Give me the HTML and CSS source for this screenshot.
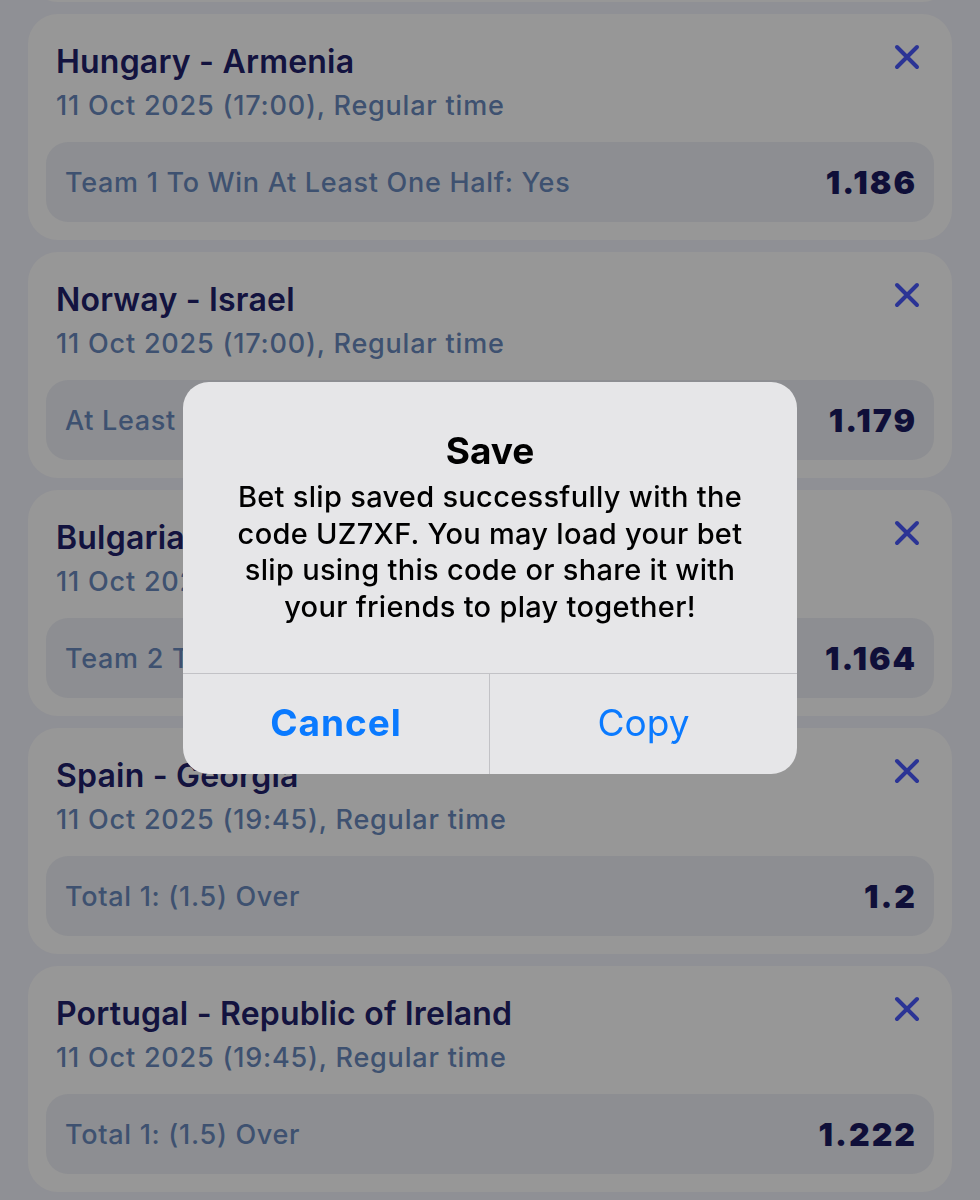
FILE: index.html
```html
<!DOCTYPE html>
<html lang="en">
<head>
<meta charset="utf-8">
<title>Bet slip</title>
<link rel="stylesheet" href="styles.css">
</head>
<body>
<main class="screen">
  <section class="slip-list">
    <article class="bet">
      <div class="bet-head">
        <div class="bet-info">
          <h2 class="bet-title">Scotland - Belarus</h2>
          <p class="bet-time">12 Oct 2025 (17:00), Regular time</p>
        </div>
        <button class="remove" aria-label="Remove"><svg viewBox="0 0 24 24"><path d="M4 4L20 20M20 4L4 20"/></svg></button>
      </div>
      <div class="pick"><span class="pick-name">Total 1: (1.5) Over</span><span class="pick-odds">1.25</span></div>
    </article>
    <article class="bet">
      <div class="bet-head">
        <div class="bet-info">
          <h2 class="bet-title">Hungary - Armenia</h2>
          <p class="bet-time">11 Oct 2025 (17:00), Regular time</p>
        </div>
        <button class="remove" aria-label="Remove"><svg viewBox="0 0 24 24"><path d="M4 4L20 20M20 4L4 20"/></svg></button>
      </div>
      <div class="pick"><span class="pick-name">Team 1 To Win At Least One Half: Yes</span><span class="pick-odds">1.186</span></div>
    </article>
    <article class="bet">
      <div class="bet-head">
        <div class="bet-info">
          <h2 class="bet-title">Norway - Israel</h2>
          <p class="bet-time">11 Oct 2025 (17:00), Regular time</p>
        </div>
        <button class="remove" aria-label="Remove"><svg viewBox="0 0 24 24"><path d="M4 4L20 20M20 4L4 20"/></svg></button>
      </div>
      <div class="pick"><span class="pick-name">At Least One Team Will Not Score: No</span><span class="pick-odds">1.179</span></div>
    </article>
    <article class="bet">
      <div class="bet-head">
        <div class="bet-info">
          <h2 class="bet-title">Bulgaria - Türkiye</h2>
          <p class="bet-time">11 Oct 2025 (19:45), Regular time</p>
        </div>
        <button class="remove" aria-label="Remove"><svg viewBox="0 0 24 24"><path d="M4 4L20 20M20 4L4 20"/></svg></button>
      </div>
      <div class="pick"><span class="pick-name">Team 2 To Win At Least One Half: Yes</span><span class="pick-odds">1.164</span></div>
    </article>
    <article class="bet">
      <div class="bet-head">
        <div class="bet-info">
          <h2 class="bet-title">Spain - Georgia</h2>
          <p class="bet-time">11 Oct 2025 (19:45), Regular time</p>
        </div>
        <button class="remove" aria-label="Remove"><svg viewBox="0 0 24 24"><path d="M4 4L20 20M20 4L4 20"/></svg></button>
      </div>
      <div class="pick"><span class="pick-name">Total 1: (1.5) Over</span><span class="pick-odds">1.2</span></div>
    </article>
    <article class="bet">
      <div class="bet-head">
        <div class="bet-info">
          <h2 class="bet-title">Portugal - Republic of Ireland</h2>
          <p class="bet-time">11 Oct 2025 (19:45), Regular time</p>
        </div>
        <button class="remove" aria-label="Remove"><svg viewBox="0 0 24 24"><path d="M4 4L20 20M20 4L4 20"/></svg></button>
      </div>
      <div class="pick"><span class="pick-name">Total 1: (1.5) Over</span><span class="pick-odds">1.222</span></div>
    </article>
  </section>

  <div class="overlay">
    <div class="alert" role="alertdialog">
      <div class="alert-body">
        <h3 class="alert-title">Save</h3>
        <p class="alert-text">Bet slip saved successfully with the code UZ7XF. You may load your bet slip using this code or share it with your friends to play together!</p>
      </div>
      <div class="alert-actions">
        <button class="alert-btn alert-btn-cancel">Cancel</button>
        <button class="alert-btn">Copy</button>
      </div>
    </div>
  </div>
</main>
</body>
</html>
```

FILE: styles.css
```css
html, body {
  margin: 0;
  padding: 0;
}

body {
  background: #eff0f8;
  font-family: Inter, "Noto Sans", "Liberation Sans", sans-serif;
  overflow: hidden;
}

.screen {
  min-height: 1200px;
}

.slip-list {
  display: flex;
  flex-direction: column;
  gap: 12px;
  padding: 0 28px;
  margin-top: -224px;
}

.bet {
  background: #fcfcfc;
  border-radius: 30px;
  padding: 30px 18px 18px;
  height: 226px;
  box-sizing: border-box;
}

.bet-head {
  display: flex;
  justify-content: space-between;
  align-items: flex-start;
  padding-left: 10px;
}

.bet-title {
  margin: 0;
  font-size: 32px;
  line-height: 36px;
  font-weight: 600;
  letter-spacing: 0.2px;
  color: #21216a;
}

.bet-time {
  margin: 9px 0 0;
  font-size: 27px;
  line-height: 34px;
  font-weight: 500;
  letter-spacing: 0.8px;
  color: #6888bb;
}

.remove {
  width: 30px;
  height: 30px;
  padding: 0;
  margin: -2px 12px 0 0;
  border: 0;
  background: none;
}

.remove svg {
  width: 30px;
  height: 30px;
  fill: none;
  stroke: #4858f8;
  stroke-width: 3.2;
  stroke-linecap: round;
}

.pick {
  margin-top: 19px;
  height: 80px;
  box-sizing: border-box;
  border-radius: 22px;
  background: #ebedf3;
  display: flex;
  align-items: center;
  justify-content: space-between;
  padding: 0 19px;
}

.pick-name {
  font-size: 27px;
  font-weight: 500;
  letter-spacing: 0.7px;
  color: #6888bb;
}

.pick-odds {
  font-size: 32px;
  font-weight: 900;
  color: #1a1a60;
  letter-spacing: 2px;
  margin-right: -2px;
}

.overlay {
  position: fixed;
  inset: 0;
  background: rgba(0, 0, 0, 0.4);
  display: flex;
  justify-content: center;
  align-items: flex-start;
  padding-top: 382px;
  box-sizing: border-box;
}

.alert {
  width: 614px;
  background: #e6e6e8;
  border-radius: 26px;
  overflow: hidden;
  font-family: Inter, "Noto Sans", "Liberation Sans", sans-serif;
}

.alert-body {
  padding: 48px 36px 47px;
  text-align: center;
}

.alert-title {
  margin: 0;
  font-size: 37px;
  line-height: 42px;
  font-weight: 700;
  color: #000;
}

.alert-text {
  margin: 7px 0 0;
  font-size: 29px;
  line-height: 36.7px;
  font-weight: 500;
  letter-spacing: 0.3px;
  color: #000;
}

.alert-actions {
  display: grid;
  grid-template-columns: 1fr 1fr;
  border-top: 1px solid #c2c2c6;
  height: 100px;
}

.alert-btn {
  border: 0;
  background: none;
  font-family: inherit;
  font-size: 37px;
  font-weight: 400;
  color: #0a7aff;
  padding: 0 0 2px;
}

.alert-btn-cancel {
  font-weight: 700;
  letter-spacing: 1px;
  border-right: 1px solid #c2c2c6;
}
```
